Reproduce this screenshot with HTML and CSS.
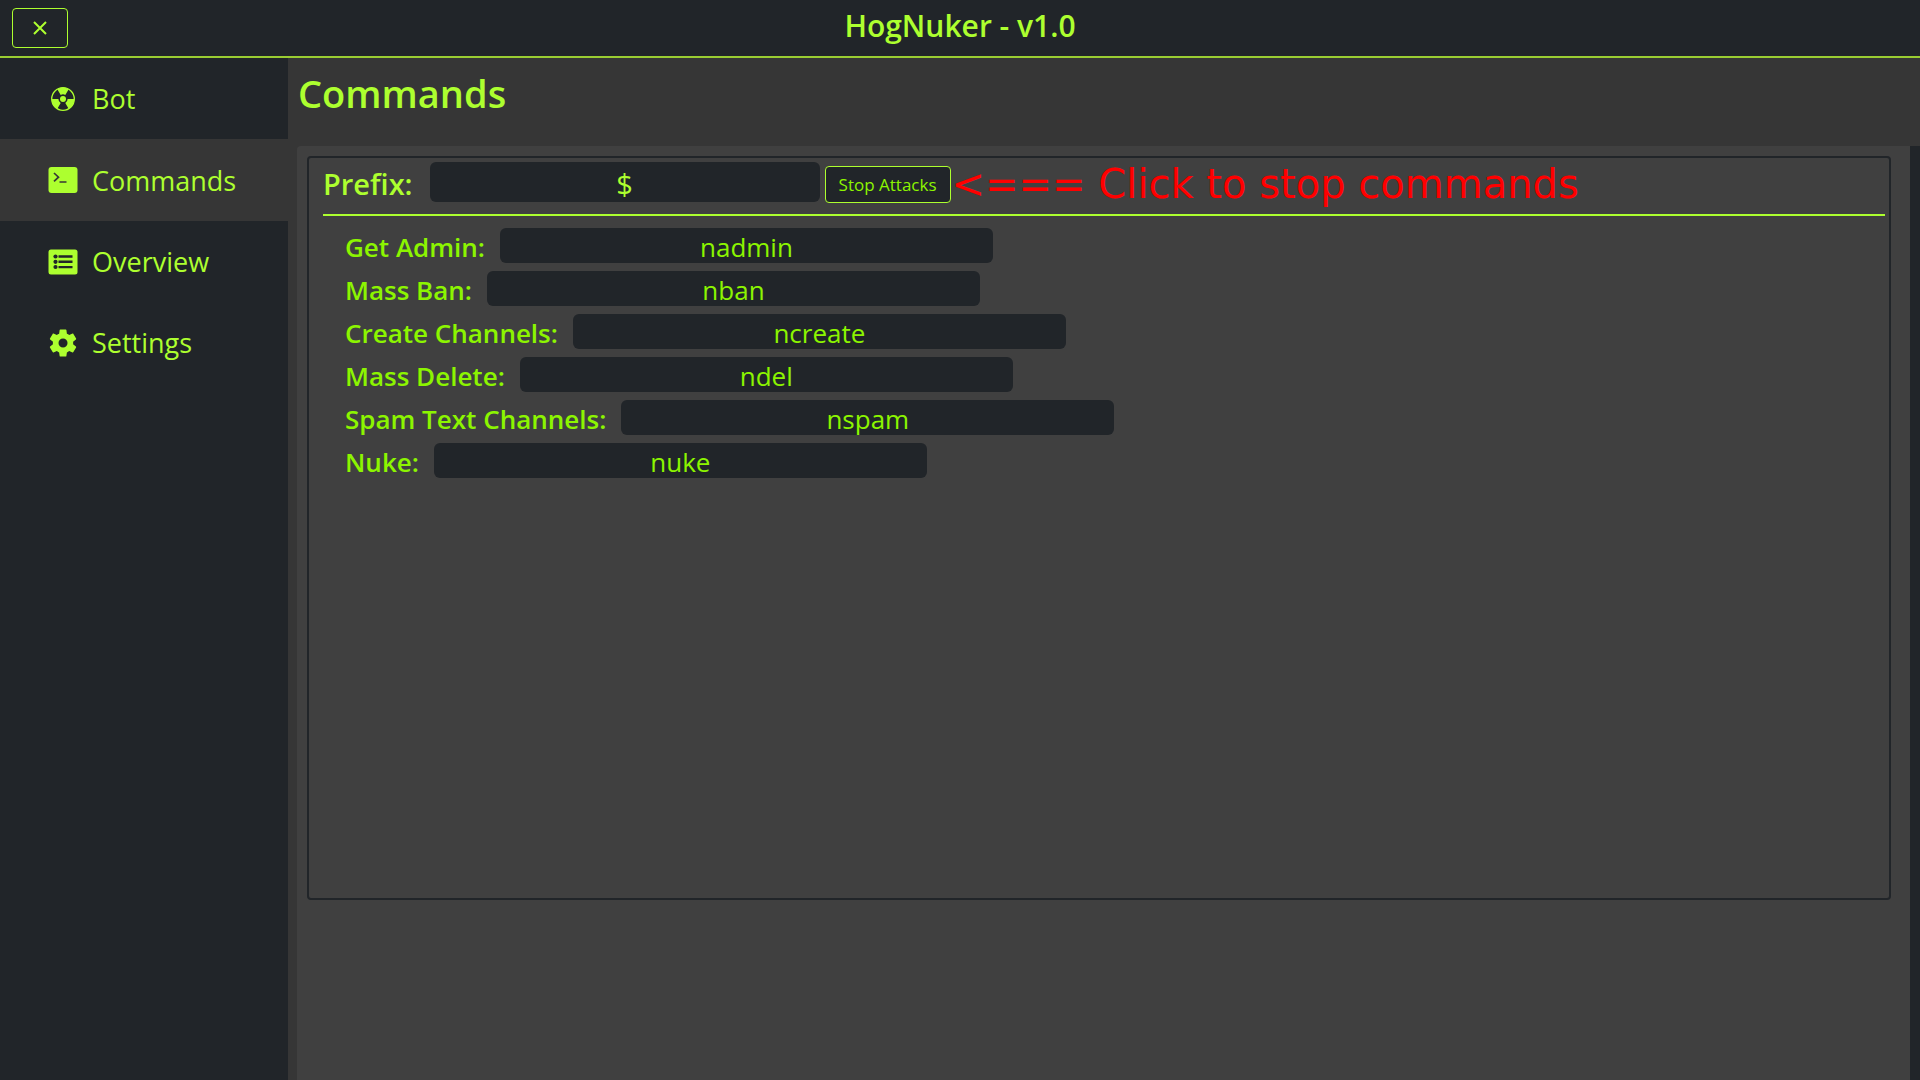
FILE: index.html
```html
<!DOCTYPE html>
<html lang="en">
<head>
<meta charset="utf-8">
<title>HogNuker - v1.0</title>
<link rel="stylesheet" href="styles.css">
</head>
<body>
<header class="topbar">
  <button class="close" type="button" aria-label="Close">
    <svg width="14" height="14" viewBox="0 0 14 14"><path d="M1 1L13 13M13 1L1 13" stroke="currentColor" stroke-width="2"/></svg>
  </button>
  <h1 class="app-title">HogNuker - v1.0</h1>
</header>
<div class="layout">
  <nav class="sidebar">
    <a class="nav-item" href="#bot">
      <svg class="icon" viewBox="0 0 30 30"><circle cx="15" cy="15" r="11.300" fill="none" stroke="currentColor" stroke-width="1.300"/><g fill="currentColor"><circle cx="15" cy="15" r="3"/><path id="blade" d="M12.700 11L9.300 5.200A11.300 11.300 0 0 1 20.700 5.200L17.300 11A4.600 4.600 0 0 0 12.700 11Z"/><use href="#blade" transform="rotate(120 15 15)"/><use href="#blade" transform="rotate(240 15 15)"/></g></svg>
      <span>Bot</span>
    </a>
    <a class="nav-item active" href="#commands">
      <svg class="icon" viewBox="0 0 30 30"><rect x="0.5" y="2" width="29" height="26" rx="3" fill="currentColor"/><path d="M6 8L10.500 12.200L6 16.400M11.500 17H18.500" fill="none" stroke="#363636" stroke-width="1.700"/></svg>
      <span>Commands</span>
    </a>
    <a class="nav-item" href="#overview">
      <svg class="icon" viewBox="0 0 30 30"><rect x="0.5" y="2.500" width="29" height="25" rx="2.500" fill="currentColor"/><g fill="#212529"><circle cx="7.500" cy="9.500" r="2.100"/><circle cx="7.500" cy="14.800" r="2.100"/><circle cx="7.500" cy="20" r="2.100"/><path d="M10.500 8.300H24.500V10.700H10.500ZM10.500 13.600H24.500V16H10.500ZM10.500 18.900H24.500V21.300H10.500Z"/></g></svg>
      <span>Overview</span>
    </a>
    <a class="nav-item" href="#settings">
      <svg class="icon" viewBox="0 0 30 30"><path transform="translate(-1.900 -1.900) scale(1.410)" fill="currentColor" d="M19.140 12.940c.04-.3.060-.61.060-.94 0-.32-.02-.64-.07-.94l2.030-1.580c.18-.14.230-.41.120-.61l-1.920-3.320c-.12-.22-.37-.29-.59-.22l-2.390.96c-.5-.38-1.030-.7-1.620-.94l-.36-2.540c-.04-.24-.24-.41-.48-.41h-3.840c-.24 0-.43.170-.47.410l-.36 2.540c-.59.240-1.130.570-1.620.940l-2.390-.96c-.22-.08-.47 0-.59.220L2.740 8.870c-.12.210-.08.470.120.610l2.030 1.580c-.05.300-.09.630-.09.940s.02.640.07.940l-2.030 1.580c-.18.140-.23.410-.12.610l1.920 3.320c.12.220.37.290.59.220l2.390-.96c.5.380 1.030.7 1.620.940l.36 2.540c.05.240.24.410.48.410h3.840c.24 0 .44-.17.470-.41l.36-2.540c.59-.24 1.130-.56 1.620-.94l2.390.96c.22.080.47 0 .59-.22l1.920-3.320c.12-.22.070-.47-.12-.61l-2.010-1.580zM12 15.200a3.200 3.200 0 1 1 0-6.400 3.200 3.200 0 0 1 0 6.400z"/></svg>
      <span>Settings</span>
    </a>
  </nav>
  <main class="content">
    <h2 class="page-title">Commands</h2>
    <div class="panel">
      <form class="card">
        <div class="prefix-row">
          <label class="prefix-label" for="prefix">Prefix:</label>
          <input class="field prefix-field" id="prefix" type="text" value="$">
          <button class="stop" type="button">Stop Attacks</button>
          <span class="hint">&lt;=== Click to stop commands</span>
        </div>
        <div class="commands">
          <div class="command"><label for="c1">Get Admin:</label><input class="field" id="c1" type="text" value="nadmin"></div>
          <div class="command"><label for="c2">Mass Ban:</label><input class="field" id="c2" type="text" value="nban"></div>
          <div class="command"><label for="c3">Create Channels:</label><input class="field" id="c3" type="text" value="ncreate"></div>
          <div class="command"><label for="c4">Mass Delete:</label><input class="field" id="c4" type="text" value="ndel"></div>
          <div class="command"><label for="c5">Spam Text Channels:</label><input class="field" id="c5" type="text" value="nspam"></div>
          <div class="command"><label for="c6">Nuke:</label><input class="field" id="c6" type="text" value="nuke"></div>
        </div>
      </form>
    </div>
  </main>
</div>
</body>
</html>
```
FILE: styles.css
```css
* {
  box-sizing: border-box;
}

body {
  margin: 0;
  min-height: 100vh;
  display: flex;
  flex-direction: column;
  background: #363636;
  color: #adff2f;
  font-family: "Open Sans", "Noto Sans", sans-serif;
}

.topbar {
  display: grid;
  grid-template-columns: 1fr auto 1fr;
  align-items: center;
  height: 58px;
  padding: 0 12px;
  background: #212529;
  border-bottom: 2px solid #9acd32;
}

.close {
  display: flex;
  align-items: center;
  justify-content: center;
  width: 56px;
  height: 40px;
  padding: 0;
  background: #212529;
  border: 1px solid #adff2f;
  border-radius: 4px;
  color: #adff2f;
}

.app-title {
  margin: 0;
  padding-bottom: 4px;
  font-size: 30px;
  line-height: 40px;
  font-weight: 600;
}

.layout {
  flex: 1;
  display: flex;
}

.sidebar {
  flex: 0 0 288px;
  background: #212529;
}

.nav-item {
  display: flex;
  align-items: center;
  gap: 14px;
  height: 81px;
  padding-left: 48px;
  color: #adff2f;
  font-size: 27px;
  text-decoration: none;
}

.active {
  height: 82px;
  background: #363636;
}

.icon {
  flex: none;
  width: 30px;
  height: 30px;
}

.content {
  flex: 1;
  min-width: 0;
  display: flex;
  flex-direction: column;
}

.page-title {
  margin: 0;
  padding: 7px 0 0 10px;
  height: 88px;
  font-size: 38px;
  line-height: 56px;
  font-weight: 600;
}

.panel {
  flex: 1;
  margin-left: 9px;
  padding: 10px 19px 10px 10px;
  background: #404040;
  border-right: 10px solid #212529;
  border-top-left-radius: 4px;
}

.card {
  min-height: 744px;
  padding: 4px 4px 4px 14px;
  border: 2px solid #212529;
  border-radius: 4px;
}

.prefix-row {
  display: flex;
  align-items: center;
  height: 54px;
  padding-bottom: 12px;
  border-bottom: 2px solid #adff2f;
}

.prefix-label {
  margin-right: 17px;
  padding-top: 2px;
  font-size: 29px;
  font-weight: 600;
}

.field {
  width: 493px;
  height: 35px;
  padding: 2px 0 0;
  background: #212529;
  border: 0;
  border-radius: 6px;
  color: #8cf500;
  font-family: inherit;
  font-size: 26px;
  text-align: center;
}

.prefix-field {
  width: 390px;
  height: 40px;
  margin-right: 5px;
  color: #adff2f;
  font-size: 29px;
}

.stop {
  height: 37px;
  width: 126px;
  margin-top: 4px;
  padding: 0;
  background: #212529;
  border: 1px solid #adff2f;
  border-radius: 4px;
  color: #8cf500;
  font-family: inherit;
  font-size: 17px;
}

.hint {
  margin: 4px 0 0 1px;
  color: #f00;
  font-family: "DejaVu Sans", sans-serif;
  font-size: 40px;
  line-height: 40px;
  white-space: nowrap;
}

.commands {
  display: flex;
  flex-direction: column;
  gap: 8px;
  padding: 12px 0 0 22px;
}

.command {
  display: flex;
  align-items: center;
  gap: 15px;
  height: 35px;
  color: #8cf500;
  font-size: 26px;
  font-weight: 600;
}

.command label {
  padding-top: 2px;
}
```
